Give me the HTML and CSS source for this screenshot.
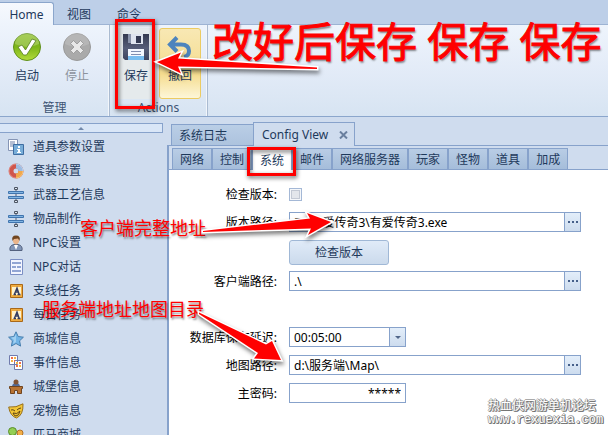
FILE: index.html
```html
<!DOCTYPE html>
<html lang="zh-CN">
<head>
<meta charset="utf-8">
<title>Config View</title>
<link rel="stylesheet" href="styles.css">
</head>
<body>
<header class="ribbon">
  <nav class="ribbon-tabs">
    <button class="ribbon-tab active">Home</button>
    <button class="ribbon-tab">视图</button>
    <button class="ribbon-tab">命令</button>
  </nav>
  <div class="ribbon-body">
    <section class="group">
      <div class="tools">
        <button class="tool">
          <svg width="30" height="30" viewBox="0 0 30 30"><defs><linearGradient id="green" x2="0" y2="1"><stop stop-color="#8fc02a"/><stop offset=".5" stop-color="#7cb518"/><stop offset="1" stop-color="#b4dc3c"/></linearGradient></defs><circle cx="15" cy="15" r="13.5" fill="url(#green)" stroke="#5f8f1c"/><path d="M3 12a12 12 0 0 1 24 0q-12 6-24 0z" fill="#fff" opacity=".22"/><path d="M6 15l4-2 3.500 5L20 7l4 1.500L14.500 23h-3z" fill="#fff" stroke="#557c20" stroke-width=".8"/></svg>
          <span>启动</span>
        </button>
        <button class="tool" disabled>
          <svg width="30" height="30" viewBox="0 0 30 30"><circle cx="15" cy="15" r="13.500" fill="#aaa" stroke="#999"/><path d="M3 12a12 12 0 0 1 24 0q-12 6-24 0z" fill="#fff" opacity=".15"/><path d="M8.500 11.500l3-3 3.500 3.500 3.500-3.500 3 3-3.500 3.500 3.500 3.500-3 3-3.500-3.500-3.500 3.500-3-3 3.500-3.500z" fill="#e9e9e9" stroke="#8d8d8d" stroke-width=".7"/></svg>
          <span>停止</span>
        </button>
      </div>
      <div class="group-name">管理</div>
    </section>
    <section class="group actions">
      <div class="tools">
        <button class="tool save">
          <svg width="30" height="30" viewBox="0 0 30 30"><defs><linearGradient id="disk" x2="0" y2="1"><stop stop-color="#34394f"/><stop offset=".55" stop-color="#565d78"/><stop offset="1" stop-color="#3d4460"/></linearGradient></defs><path d="M2 2h26v26H4l-2-2z" fill="url(#disk)"/><path d="M7 2h3v9H7z" fill="#8a93aa"/><path d="M10 2h12v10H10z" fill="#dfe4ee"/><path d="M15 4h5v7h-5z" fill="#343a52"/><path d="M7 17h16v11H7z" fill="#f4f8ff"/><path d="M10 19h10v1H10zM10 22h10v1H10z" fill="#7f8db0"/><path d="M7 24h16v4H7z" fill="#79bdf0"/></svg>
          <span>保存</span>
        </button>
        <button class="tool highlighted">
          <svg width="30" height="30" viewBox="0 0 30 30"><path d="M12 5.500L5 12.500l7 7M6 12.500h10q8 0 8 6.500 0 5-5 6" fill="none" stroke="#4d84bd" stroke-width="4"/></svg>
          <span>撤回</span>
        </button>
      </div>
      <div class="group-name">Actions</div>
    </section>
  </div>
</header>

<div class="workspace">
  <aside class="sidebar">
    <button class="scroll-up" aria-label="Scroll up"><i class="up"></i></button>
    <ul class="menu">
      <li><svg viewBox="0 0 16 16"><path d="M.5.5h9v11h-9z" fill="#fff" stroke="#8595b5"/><path d="M2 3h5M2 5h5M2 7h3" stroke="#6d7fa6"/><path d="M5.500 5.500h10v10h-10z" fill="#78add8" stroke="#3e6da1"/><path d="M10 7h2v2h-2zM9 10h3v3h1v1H9v-1h1v-2H9z" fill="#fff"/></svg>道具参数设置</li>
      <li><svg viewBox="0 0 16 16"><circle cx="8" cy="8" r="5" fill="none" stroke="#d0564c" stroke-width="5"/><path d="M8 3a5 5 0 0 1 5 5" fill="none" stroke="#9dbce2" stroke-width="5"/><path d="M13 8a5 5 0 0 1-5 5" fill="none" stroke="#f0a94c" stroke-width="5"/><circle cx="8" cy="8" r="7" fill="none" stroke="#fff" opacity=".3"/></svg>套装设置</li>
      <li><svg viewBox="0 0 16 16"><path d="M8 2v12" stroke="#555e70"/><path d="M6.500.5h3v2h-3zM6.500 13.500h3v2h-3z" fill="#dce4ef" stroke="#4c5563"/><path d="M.5 4.500h15v2H.5zM.5 9.500h15v2H.5z" fill="#82b5e3" stroke="#3f74ae"/></svg>武器工艺信息</li>
      <li><svg viewBox="0 0 16 16"><path d="M8 2v12" stroke="#555e70"/><path d="M6.500.5h3v2h-3zM6.500 13.500h3v2h-3z" fill="#dce4ef" stroke="#4c5563"/><path d="M.5 4.500h15v2H.5zM.5 9.500h15v2H.5z" fill="#82b5e3" stroke="#3f74ae"/></svg>物品制作</li>
      <li><svg viewBox="0 0 16 16"><path d="M2 15.500q-1-5 4-6h4q5 1 4 6z" fill="#8296b8" stroke="#53617e"/><path d="M6 10l2 5 2-5z" fill="#fff"/><path d="M5 3h6v4q-3 5-6 0z" fill="#e9b48a"/><path d="M4.500 6Q3 .5 8 .5T11.500 6L10 3.500 6 4z" fill="#70451f"/></svg>NPC设置</li>
      <li><svg viewBox="0 0 16 16"><path d="M2.500.5h12v15h-12z" fill="#f2f5ff" stroke="#7b8fc4"/><path d="M4 3h9v2H4zM4 7h4v2H4zM9 7h4v2H9zM4 11h9v2H4z" fill="#91a5d4"/></svg>NPC对话</li>
      <li><svg viewBox="0 0 16 16"><path d="M2.500 1.500h12v13h-12z" fill="#f0ad42" stroke="#a96818"/><path d="M4 4h9v8H4z" fill="#fff2cc"/><path d="M5.500 11.500h2.500M9.500 11.500h3M6.500 11L9 5l2 6M7.500 9h3" fill="none" stroke="#343c60" stroke-width="1.400"/></svg>支线任务</li>
      <li><svg viewBox="0 0 16 16"><path d="M2.500 1.500h12v13h-12z" fill="#f0ad42" stroke="#a96818"/><path d="M4 4h9v8H4z" fill="#fff2cc"/><path d="M5.500 11.500h2.500M9.500 11.500h3M6.500 11L9 5l2 6M7.500 9h3" fill="none" stroke="#343c60" stroke-width="1.400"/></svg>每日任务</li>
      <li><svg viewBox="0 0 16 16"><path d="M8 .8l2.200 4.700 5.200.7-3.800 3.600 1 5.300L8 12.500l-4.600 2.600 1-5.300L.6 6.200l5.200-.7z" fill="#72b4e6" stroke="#487fae"/><path d="M8 3v8l-3 2 1-4-3-2.500 3.500-.5z" fill="#c2e3f8" opacity=".6"/></svg>商城信息</li>
      <li><svg viewBox="0 0 16 16"><path d="M1.500.5h8v9h-8zM6.500 5.500h8v9h-8z" fill="#fff" stroke="#707bad"/><path d="M3 2h2v2H3zM6 5h1v2H6zM11 7h2v2h-2zM8 10h2v2H8z" fill="#f26c48"/><path d="M6 2h2v2H6zM3 5h2v2H3zM8 7h2v2H8zM11 10h2v2h-2z" fill="#f4b545"/></svg>事件信息</li>
      <li><svg viewBox="0 0 16 16"><path d="M4 8q0-4 4-4t4 4z" fill="#536b98"/><circle cx="8" cy="3" r="2.500" fill="#815333"/><path d="M1.500 7.500h13v2h-1v5h-4v-3h-3v3h-4v-5h-1z" fill="#b87332" stroke="#70441f"/></svg>城堡信息</li>
      <li><svg viewBox="0 0 16 16"><path d="M.7 4Q8 5 15 .8 15.500 12 8.500 15 2 13 .7 4z" fill="#f3c636" stroke="#98701b"/><path d="M3 7q2-1 4 1M9 7q2-2 4-2M5 10q4 2 7-2-1 5-4 5-2 0-3-3" fill="none" stroke="#5e4416"/></svg>宠物信息</li>
      <li><svg viewBox="0 0 16 16"><circle cx="4.500" cy="4.500" r="4" fill="#93ce54" stroke="#578e28"/><circle cx="12" cy="6" r="3" fill="#f3ae49" stroke="#b27225"/><circle cx="8" cy="12" r="3" fill="#83ace0" stroke="#496fa5"/></svg>匹马商城</li>
    </ul>
  </aside>

  <main class="main">
    <div class="doc-tabs">
      <button class="doc-tab">系统日志</button>
      <button class="doc-tab active">Config View<svg width="9" height="8" viewBox="0 0 9 8"><path d="M1 .5l7 7M8 .5l-7 7" stroke="#6a7f9e" stroke-width="2"/></svg></button>
    </div>
    <div class="document">
      <div class="page-tabs">
        <button class="page-tab">网络</button>
        <button class="page-tab">控制</button>
        <button class="page-tab active">系统</button>
        <button class="page-tab">邮件</button>
        <button class="page-tab">网络服务器</button>
        <button class="page-tab">玩家</button>
        <button class="page-tab">怪物</button>
        <button class="page-tab">道具</button>
        <button class="page-tab">加成</button>
      </div>
      <form class="form">
        <label for="check">检查版本:</label>
        <div class="field"><input class="check" type="checkbox" id="check"></div>
        <label for="version">版本路径:</label>
        <div class="field box"><input id="version" type="text" value="D:\有爱传奇3\有爱传奇3.exe"><button type="button" class="side dots" aria-label="Browse"><i></i><i></i><i></i></button></div>
        <div class="field second"><button type="button" class="push">检查版本</button></div>
        <label for="client">客户端路径:</label>
        <div class="field box"><input id="client" type="text" value=".\"><button type="button" class="side dots" aria-label="Browse"><i></i><i></i><i></i></button></div>
        <div class="blank"></div>
        <label for="delay">数据库保存延迟:</label>
        <div class="field box short"><input id="delay" type="text" value="00:05:00"><button type="button" class="side" aria-label="Open"><i class="down"></i></button></div>
        <label for="map">地图路径:</label>
        <div class="field box"><input id="map" type="text" value="d:\服务端\Map\"><button type="button" class="side dots" aria-label="Browse"><i></i><i></i><i></i></button></div>
        <label for="master">主密码:</label>
        <div class="field box short"><input id="master" class="secret" type="text" value="*****"></div>
      </form>
    </div>
  </main>
</div>

<div class="notes">
  <div class="frame frame-save"></div>
  <div class="frame frame-tab"></div>
  <div class="note note-save">改好后保存 保存 保存</div>
  <div class="note note-client">客户端完整地址</div>
  <div class="note note-map">服务端地址地图目录</div>
  <svg class="arrows" width="608" height="435" viewBox="0 0 608 435">
    <path d="M157 62L181 52.500 178 58.500 317 67.500V69L178 66.500 181 73.500z"/>
    <path d="M203 231L310 218.500 307 213 331 222 308 235 311 228.500 203 232z"/>
    <path d="M199 312.500L266 344.500 272 341 281 360 254 358.500 258 353 199 314z"/>
  </svg>
  <div class="watermark">热血侠网游单机论坛<br><span>www.rexuexia.com</span></div>
</div>
</body>
</html>
```
FILE: styles.css
```css
* { box-sizing: border-box; }

body {
  margin: 0;
  height: 100vh;
  position: relative;
  overflow: hidden;
  display: flex;
  flex-direction: column;
  background: #cfdcee;
  color: #1e395b;
  font: 12px/16px "Noto Sans", "Noto Sans CJK SC", sans-serif;
}

button, input {
  font: inherit;
  color: inherit;
  margin: 0;
  padding: 0;
  border: 0;
  background: none;
}

.ribbon { background: #bdcfe8; }

.ribbon-tabs {
  display: flex;
  height: 24px;
  padding-top: 2px;
}

.ribbon-tab {
  width: 50px;
  height: 22px;
  padding-top: 3px;
}

.ribbon-tab.active {
  width: 54px;
  height: 23px;
  padding-top: 1px;
  border: 1px solid #8ba6cc;
  border-width: 1px 1px 0 0;
  border-radius: 0 3px 0 0;
  background: linear-gradient(#f6f9fe, #eef4fc);
  position: relative;
}

.ribbon-body {
  display: flex;
  height: 93px;
  border-top: 1px solid #9db3d3;
  border-bottom: 1px solid #8ba6cc;
  background: linear-gradient(#eef4fc, #e4ecf8 45%, #d7e4f2);
}

.group {
  display: flex;
  flex-direction: column;
  justify-content: space-between;
  width: 110px;
  border-right: 1px solid #aabbd1;
  box-shadow: inset -1px 0 #f2f6fb;
}

.actions { width: 98px; }

.tools { display: flex; padding-top: 3px; gap: 6px; padding-left: 5px; }

.tool {
  display: flex;
  flex-direction: column;
  align-items: center;
  gap: 6px;
  width: 44px;
  height: 71px;
  padding-top: 4px;
  border-radius: 3px;
}

.tool:disabled { color: #8d939d; }
.save { background: #e5eaec; }
.actions .tool { width: 42px; }
.actions .tools { gap: 2px; }

.highlighted {
  padding-top: 3px;
  border: 1px solid #eccb62;
  background: linear-gradient(#f8e8b4, #f5dc8e 65%, #fdf6d8);
}

.group-name {
  text-align: center;
  color: #3d5474;
}

.workspace {
  flex: 1;
  min-height: 0;
  display: flex;
  gap: 4px;
}

.sidebar { width: 163px; padding-top: 6px; }

.scroll-up {
  display: flex;
  justify-content: center;
  align-items: center;
  width: 100%;
  height: 10px;
  border: 1px solid #87a2cb;
  border-left: 0;
  background: #d9e6f7;
}

.up { border: 3px solid transparent; border-top: 0; border-bottom-color: #7389ab; }
.down { border: 3px solid transparent; border-bottom: 0; border-top-color: #50668a; }

.menu { list-style: none; margin: 0; padding: 2px 0 0 8px; }

.menu li {
  display: flex;
  align-items: center;
  gap: 9px;
  height: 24px;
}

.menu svg { width: 16px; height: 16px; }

.main {
  flex: 1;
  min-width: 0;
  display: flex;
  flex-direction: column;
  padding-top: 5px;
}

.doc-tabs {
  display: flex;
  align-items: flex-end;
  height: 23px;
  padding-left: 4px;
}

.doc-tab {
  height: 21px;
  width: 82px;
  padding: 2px 12px 0 7px;
  text-align: left;
  border: 1px solid #87a2cb;
  border-width: 1px 0 0 1px;
  background: linear-gradient(#bacee6, #adc3de);
}

.doc-tab.active {
  display: flex;
  align-items: center;
  justify-content: space-between;
  width: 102px;
  height: 24px;
  margin-bottom: -1px;
  padding: 0 6px 0 8px;
  border-right-width: 1px;
  background: #cfdcee;
  position: relative;
}

.document {
  flex: 1;
  display: flex;
  flex-direction: column;
  border-left: 2px solid #87a2cb;
  border-top: 1px solid #87a2cb;
  padding-top: 2px;
}

.page-tabs {
  display: flex;
  padding-left: 3px;
  border-bottom: 1px solid #87a2cb;
}

.page-tab {
  height: 21px;
  min-width: 40px;
  padding: 2px 7px 0;
  border: 1px solid #87a2cb;
  border-bottom: 0;
  background: linear-gradient(#b9cde5, #a5bdda);
}

.page-tab.active {
  height: 22px;
  margin-bottom: -1px;
  background: #fff;
}

.form {
  flex: 1;
  display: grid;
  grid-template-columns: 108px minmax(0, 1fr);
  grid-template-rows: 20px 20px 23px repeat(5, 20px);
  gap: 8px 12px;
  padding: 14px 27px 0 0;
  background: #fff;
  color: #000;
}

.form label { text-align: right; line-height: 22px; }
.field { display: flex; align-items: center; }
.second { grid-column: 2; align-items: flex-start; }
.blank { grid-column: 1 / -1; }

.box { border: 1px solid #87a2cb; }
.short { width: 117px; }

.box input {
  flex: 1;
  min-width: 0;
  height: 18px;
  padding: 0 4px;
  background: #fff;
  outline: 0;
}

.box .secret { text-align: right; }

.check {
  appearance: none;
  width: 13px;
  height: 13px;
  border: 1px solid #a4b8d6;
  background: #e3e6eb;
  box-shadow: inset 0 0 0 1px #f5f7fa, inset 0 0 0 2px #c3c9d4;
}

.side {
  display: flex;
  align-items: center;
  justify-content: center;
  gap: 2px;
  width: 16px;
  height: 18px;
  border-left: 1px solid #87a2cb;
  background: linear-gradient(#e3eefa, #cddcee);
}

.dots i { width: 2px; height: 2px; background: #46608a; }

.push {
  width: 100px;
  height: 25px;
  border: 1px solid #a0b8d6;
  border-radius: 3px;
  background: linear-gradient(#e0ebf8, #cbdaec);
  color: #1e395b;
}

.notes { position: absolute; inset: 0; overflow: hidden; pointer-events: none; }

.frame {
  position: absolute;
  border: 3px solid #f00;
  filter: drop-shadow(1px 2px 2px rgba(0, 0, 0, .6));
}

.frame-save { left: 115px; top: 19px; width: 40px; height: 90px; }
.frame-tab { left: 247px; top: 147px; width: 49px; height: 29px; }

.note {
  position: absolute;
  color: #f00;
  white-space: nowrap;
  font-family: "Liberation Serif", "Noto Sans CJK SC", sans-serif;
  text-shadow: 1px 2px 2px rgba(0, 0, 0, .45);
}

.note-save {
  left: 212px;
  top: 19px;
  font-size: 41px;
  line-height: 48px;
  -webkit-text-stroke: 1px #f00;
}

.note-client { left: 80px; top: 218px; font-size: 18px; line-height: 22px; }
.note-map { left: 42px; top: 299px; font-size: 18px; line-height: 22px; }

.arrows { position: absolute; left: 0; top: 0; filter: drop-shadow(1px 3px 2px rgba(0, 0, 0, .5)); }
.arrows path { fill: #f00; stroke: #fff; stroke-width: 3px; paint-order: stroke; }

.watermark {
  position: absolute;
  left: 488px;
  bottom: 8px;
  color: #fff;
  line-height: 13px;
  text-shadow: 1px 0 #777, -1px 0 #aaa, 0 1px #777, 0 -1px #aaa, 1px 1px #666;
}

.watermark span { font-family: "Liberation Mono", monospace; }
```
